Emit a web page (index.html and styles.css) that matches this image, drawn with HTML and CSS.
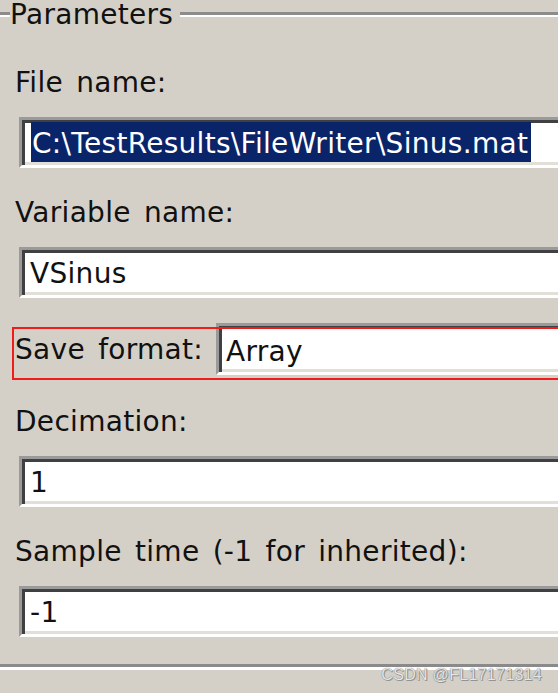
FILE: index.html
```html
<!DOCTYPE html>
<html>
<head>
<meta charset="utf-8">
<link rel="stylesheet" href="styles.css">
</head>
<body>
<div class="group">
  <div class="group-title"><span class="stub"></span><span class="title-text">Parameters</span><span class="rule"></span></div>

  <div class="field first">
    <div class="label">File name:</div>
    <div class="edit"><span class="sel">C:\TestResults\FileWriter\Sinus.mat</span></div>
  </div>

  <div class="field">
    <div class="label">Variable name:</div>
    <div class="edit">VSinus</div>
  </div>

  <div class="inline-field marked">
    <div class="label inline-label">Save format:</div>
    <div class="edit inline-edit">Array</div>
  </div>

  <div class="field after-inline">
    <div class="label">Decimation:</div>
    <div class="edit">1</div>
  </div>

  <div class="field">
    <div class="label">Sample time (-1 for inherited):</div>
    <div class="edit">-1</div>
  </div>
</div>
<div class="watermark">CSDN @FL17171314</div>
</body>
</html>
```

FILE: styles.css
```css
html, body {
  margin: 0;
  padding: 0;
  background: #d4d0c8;
  overflow: hidden;
}

body {
  width: 558px;
  height: 693px;
  font-family: "DejaVu Sans", sans-serif;
  font-size: 28px;
  letter-spacing: 0.3px;
  word-spacing: 4px;
  color: #111;
}

.group {
  margin-right: -40px;
  padding-bottom: 27px;
  border-bottom: 3px solid #8a8a8a;
  box-shadow: 0 3px 0 #ffffff;
}

.group-title {
  display: flex;
  align-items: center;
  height: 28px;
  line-height: 28px;
}

.stub,
.rule {
  height: 0;
  border-top: 3px solid #8c8c8c;
  border-bottom: 2px solid #ffffff;
}

.stub {
  width: 10px;
}

.title-text {
  margin-right: 7px;
  padding-top: 1px;
  white-space: nowrap;
}

.rule {
  flex: 1;
}

.field {
  margin-top: 31px;
}

.field.first {
  margin-top: 41px;
}

.field.after-inline {
  margin-top: 33px;
}

.label {
  height: 28px;
  line-height: 28px;
  padding-left: 15px;
  white-space: nowrap;
}

.edit {
  margin-top: 20px;
  margin-left: 19px;
  background: #ffffff;
  border-style: solid;
  border-width: 3px;
  border-color: #9a9a9a #ffffff #ffffff #9a9a9a;
  box-shadow: inset 3px 3px 0 #404040, inset -3px -3px 0 #e2dfd9;
  padding: 5px 0 3px 8px;
  line-height: 37px;
  height: 37px;
  white-space: nowrap;
  overflow: hidden;
}

.sel {
  margin-left: 1px;
  padding: 5px 3px 2px 1px;
  background: #0a246a;
  color: #ffffff;
}

.inline-field {
  position: relative;
  display: flex;
  margin-top: 25px;
  margin-bottom: 3px;
}

.inline-label {
  box-sizing: border-box;
  flex: 0 0 216px;
  padding-top: 13px;
  height: auto;
}

.inline-edit {
  flex: 1;
  margin: 0;
  padding: 9px 0 3px 7px;
  line-height: 34px;
  height: 34px;
}

.marked::after {
  content: "";
  position: absolute;
  left: 12px;
  top: 4px;
  right: 0;
  height: 49px;
  border: 2px solid #f01c1c;
  pointer-events: none;
}

.watermark {
  font-family: "Liberation Sans", Arial, sans-serif;
  font-size: 16px;
  line-height: 16px;
  word-spacing: 0;
  text-align: right;
  padding-right: 16px;
  color: #e6e6e6;
  text-shadow: 0 0 1px #5a5a5a, 1px 1px 0 #9a9a9a;
  letter-spacing: 0.3px;
}
```
